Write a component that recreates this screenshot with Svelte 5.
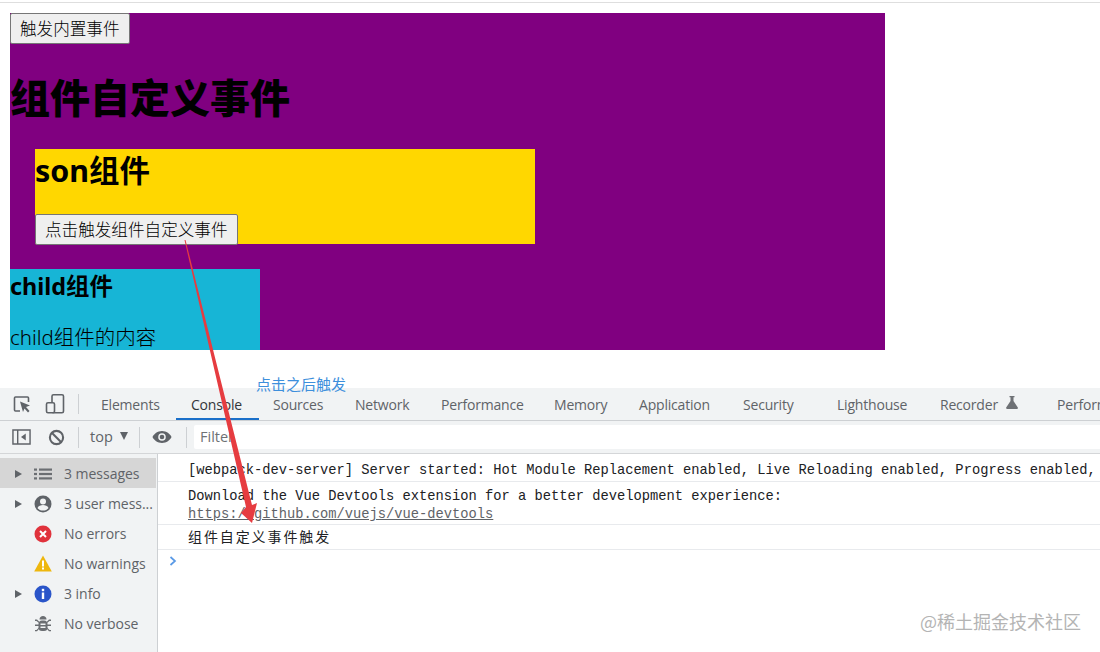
<script>
	const tabs = [
		{ name: 'Elements', width: 89 },
		{ name: 'Console', width: 83, active: true },
		{ name: 'Sources', width: 82 },
		{ name: 'Network', width: 86 },
		{ name: 'Performance', width: 113 },
		{ name: 'Memory', width: 85 },
		{ name: 'Application', width: 104 },
		{ name: 'Security', width: 94 },
		{ name: 'Lighthouse', width: 103 },
		{ name: 'Recorder', width: 117, flask: true },
		{ name: 'Performance insights', width: 160 }
	];
	const filters = [
		{ label: '3 messages', icon: 'list', arrow: true, selected: true },
		{ label: '3 user mess...', icon: 'user', arrow: true },
		{ label: 'No errors', icon: 'error' },
		{ label: 'No warnings', icon: 'warning' },
		{ label: '3 info', icon: 'info', arrow: true },
		{ label: 'No verbose', icon: 'bug' }
	];
</script>

<div class="page">
	<div class="app">
		<button class="native">触发内置事件</button>
		<h1>组件自定义事件</h1>
		<div class="son">
			<h2>son组件</h2>
			<button class="native">点击触发组件自定义事件</button>
		</div>
		<div class="child">
			<h3>child组件</h3>
			<p>child组件的内容</p>
		</div>
	</div>

	<div class="devtools">
		<div class="tabbar">
			<div class="tab-icons">
				<svg width="20" height="20" viewBox="0 0 20 20" fill="none">
					<path d="M8 17H3.500a1 1 0 0 1-1-1V4a1 1 0 0 1 1-1h12a1 1 0 0 1 1 1v4" stroke="#5f6368" stroke-width="1.600" />
					<path d="M8 7.500l10 4-4 1.500 3.500 4-1.500 1.500-3.500-4-1.500 3.500z" fill="#5f6368" />
				</svg>
				<svg width="20" height="22" viewBox="0 0 20 22" fill="none">
					<rect x="7" y="1.800" width="11.500" height="18" rx="1.500" stroke="#5f6368" stroke-width="1.600" />
					<rect x="1.500" y="9.800" width="8" height="10" rx="1.500" fill="#f1f3f4" stroke="#5f6368" stroke-width="1.600" />
				</svg>
			</div>
			<span class="sep"></span>
			<div class="tabs">
				{#each tabs as tab}
					<div class="tab" class:active={tab.active} style="width: {tab.width}px">
						{tab.name}
						{#if tab.flask}
							<svg class="flask" width="12" height="13" viewBox="0 0 12 13"><path d="M3.500 0h5v1.200h-1v3.800l4.300 6.500c.4.700 0 1.500-.8 1.500H1c-.8 0-1.200-.8-.8-1.500L4.500 5V1.200h-1z" fill="#6e7175" /></svg>
						{/if}
					</div>
				{/each}
			</div>
		</div>

		<div class="toolbar">
			<svg class="tool-first" width="19" height="16" viewBox="0 0 20 16" fill="none" preserveAspectRatio="none">
				<rect x="1" y="1" width="18" height="14" stroke="#5f6368" stroke-width="1.500" />
				<path d="M6 1v14" stroke="#5f6368" stroke-width="1.500" />
				<path d="M14.500 4.500v7l-5-3.500z" fill="#5f6368" />
			</svg>
			<svg width="17" height="17" viewBox="0 0 18 18" fill="none">
				<circle cx="9" cy="9" r="7" stroke="#5f6368" stroke-width="2.200" />
				<path d="M4 4l10 10" stroke="#5f6368" stroke-width="2.200" />
			</svg>
			<span class="sep short first"></span>
			<span class="context">top</span>
			<span class="caret"></span>
			<span class="sep short middle"></span>
			<svg class="eye" width="20" height="14" viewBox="0 0 20 14">
				<path d="M10 1C5.500 1 2 3.800.5 7 2 10.200 5.500 13 10 13s8-2.800 9.500-6C18 3.800 14.500 1 10 1z" fill="#5f6368" />
				<circle cx="10" cy="7" r="3.800" fill="#f1f3f4" />
				<circle cx="10" cy="7" r="2.300" fill="#5f6368" />
			</svg>
			<span class="sep short last"></span>
			<div class="filter">Filter</div>
		</div>

		<div class="panes">
			<aside class="sidebar">
				{#each filters as item}
					<div class="filter-row" class:selected={item.selected}>
						<span class="arrow" class:hidden={!item.arrow}></span>
						<span class="filter-icon">
							{#if item.icon === 'list'}
								<svg width="18" height="12" viewBox="0 0 18 12" fill="#6b6e72">
									<rect x="0" y="0.500" width="3" height="2.200" /><rect x="0" y="4.900" width="3" height="2.200" /><rect x="0" y="9.300" width="3" height="2.200" />
									<rect x="5" y="0.500" width="13" height="2.200" /><rect x="5" y="4.900" width="13" height="2.200" /><rect x="5" y="9.300" width="13" height="2.200" />
								</svg>
							{:else if item.icon === 'user'}
								<svg width="18" height="18" viewBox="0 0 18 18">
									<circle cx="9" cy="9" r="8.500" fill="#5f6368" />
									<circle cx="9" cy="6.500" r="3" fill="#f1f3f4" />
									<path d="M3.500 13c1-2.200 3.200-3 5.500-3s4.500.8 5.500 3c-1.200 1.600-3.200 2.600-5.500 2.600S4.700 14.600 3.500 13z" fill="#f1f3f4" />
								</svg>
							{:else if item.icon === 'error'}
								<svg width="18" height="18" viewBox="0 0 18 18">
									<circle cx="9" cy="9" r="8.500" fill="#e0323c" />
									<path d="M6 6l6 6M12 6l-6 6" stroke="#fff" stroke-width="2" />
								</svg>
							{:else if item.icon === 'warning'}
								<svg width="18" height="17" viewBox="0 0 18 17">
									<path d="M9 .5L17.800 16.500H.2z" fill="#eeb70e" />
									<rect x="8" y="5.500" width="2" height="6" fill="#fff" />
									<rect x="8" y="12.500" width="2" height="2" fill="#fff" />
								</svg>
							{:else if item.icon === 'info'}
								<svg width="18" height="18" viewBox="0 0 18 18">
									<circle cx="9" cy="9" r="8.500" fill="#2a55c9" />
									<rect x="7.800" y="7.500" width="2.400" height="6.500" fill="#fff" />
									<rect x="7.800" y="3.800" width="2.400" height="2.400" fill="#fff" />
								</svg>
							{:else}
								<svg width="16" height="17" viewBox="0 0 16 17" fill="#6b6e72">
									<path d="M4.500 4.500c0-2 1.500-3.500 3.500-3.500s3.500 1.500 3.500 3.500z" />
									<rect x="3.500" y="5.500" width="9" height="10.500" rx="3.500" />
									<path d="M0 4.500h2l2 2v1.500L1.500 6H0zM16 4.500h-2l-2 2v1.500L14.500 6H16zM0 9.500h4v1.500H0zM12 9.500h4v1.500h-4zM0 15h1.500L4 12.500V14l-2 2.200H0zM16 15h-1.500L12 12.500V14l2 2.200h2z" />
									<rect x="5.500" y="8.500" width="5" height="1.500" fill="#f1f3f4" /><rect x="5.500" y="11.500" width="5" height="1.500" fill="#f1f3f4" />
								</svg>
							{/if}
						</span>
						<span>{item.label}</span>
					</div>
				{/each}
			</aside>

			<main class="console">
				<div class="line one">[webpack-dev-server] Server started: Hot Module Replacement enabled, Live Reloading enabled, Progress enabled,</div>
				<div class="line two">
					<div>Download the Vue Devtools extension for a better development experience:</div>
					<div class="link">https://github.com/vuejs/vue-devtools</div>
				</div>
				<div class="line three">组件自定义事件触发</div>
				<div class="prompt">
					<svg width="8" height="10" viewBox="0 0 8 10" fill="none"><path d="M1.500 1l4.500 4-4.500 4" stroke="#5a9ae6" stroke-width="1.700" /></svg>
				</div>
			</main>
		</div>
	</div>

	<span class="note">点击之后触发</span>
	<svg class="pointer" width="1100" height="652" viewBox="0 0 1100 652">
		<path d="M184.500 240L185.500 240L252 505L257 503L252 523L241 513L246 507z" fill="#e63c40" />
	</svg>
	<span class="mark">@稀土掘金技术社区</span>
</div>

<style>
	:global(body) {
		margin: 0;
		background: #fff;
	}

	.page {
		position: relative;
		width: 1100px;
		height: 652px;
		overflow: hidden;
		box-sizing: border-box;
		border-top: 1px solid transparent;
		font-family: 'Noto Sans', 'Noto Sans CJK SC', sans-serif;
		color: #000;
	}
	.page::before {
		content: '';
		display: block;
		height: 1px;
		margin-top: 1px;
		background: #dedede;
	}

	.app {
		width: 875px;
		height: 337px;
		margin: 10px 0 0 10px;
		background: #800080;
	}
	.native {
		display: block;
		box-sizing: border-box;
		height: 31px;
		padding: 0 9px;
		border: 1px solid #767676;
		border-radius: 2px;
		background: #efefef;
		color: #000;
		font-family: 'Noto Sans CJK SC', sans-serif;
		font-size: 16.600px;
		font-weight: 300;
		line-height: 29px;
	}
	h1 {
		margin: 26px 0 0;
		height: 79px;
		font-size: 40px;
		line-height: 56px;
		font-weight: 900;
	}
	.son {
		width: 500px;
		height: 95px;
		margin-left: 25px;
		background: #ffd700;
	}
	h2 {
		margin: 0;
		height: 65px;
		font-size: 30.400px;
		line-height: 44px;
		font-weight: 700;
	}
	.child {
		width: 250px;
		height: 81px;
		margin-top: 25px;
		background: #17b5d6;
	}
	h3 {
		margin: 0;
		height: 56px;
		font-size: 23.400px;
		line-height: 34px;
		font-weight: 700;
	}
	p {
		margin: 0;
		font-size: 20.500px;
		line-height: 25px;
		font-weight: 300;
		color: #000;
	}

	.devtools {
		margin-top: 38px;
		height: 264px;
		background: #fff;
		font-family: 'Open Sans', 'Noto Sans', sans-serif;
		color: #5f6368;
	}
	.tabbar {
		display: flex;
		align-items: center;
		box-sizing: border-box;
		height: 33px;
		background: #f1f3f4;
		border-bottom: 1px solid #cdd0d3;
	}
	.tab-icons {
		flex: none;
		display: flex;
		align-items: center;
		gap: 13px;
		width: 78px;
		box-sizing: border-box;
		padding-left: 12px;
	}
	.sep {
		flex: none;
		width: 1px;
		height: 20px;
		background: #cdd0d3;
	}
	.tabs {
		display: flex;
		margin-left: 8px;
		flex: none;
	}
	.tab {
		flex: none;
		box-sizing: border-box;
		height: 32px;
		padding-left: 14px;
		font-size: 14px;
		letter-spacing: -0.2px;
		line-height: 33px;
		white-space: nowrap;
		position: relative;
	}
	.tab.active {
		padding-left: 15px;
		color: #33363a;
		border-bottom: 2px solid #1a6fc9;
	}
	.flask {
		margin-left: 5px;
		vertical-align: 1px;
	}

	.toolbar {
		display: flex;
		align-items: center;
		box-sizing: border-box;
		height: 33px;
		background: #f1f3f4;
		border-bottom: 1px solid #d4d6d8;
	}
	.tool-first {
		margin: 0 17px 0 12px;
	}
	.sep.short {
		height: 21px;
	}
	.sep.first {
		margin: 0 11px 0 13px;
	}
	.sep.middle {
		margin: 0 12px 0 11px;
	}
	.sep.last {
		margin: 0 7px 0 14px;
	}
	.context {
		width: 23px;
		font-size: 14.500px;
		line-height: 20px;
	}
	.caret {
		width: 0;
		height: 0;
		margin: -2px 0 0 7px;
		border-left: 4.500px solid transparent;
		border-right: 4.500px solid transparent;
		border-top: 8px solid #5f6368;
	}
	.eye {
		flex: none;
	}
	.filter {
		flex: 1;
		box-sizing: border-box;
		height: 24px;
		padding-left: 6px;
		background: #fff;
		font-size: 14.500px;
		line-height: 24px;
		color: #6e7175;
		border-radius: 2px 0 0 2px;
	}

	.panes {
		display: flex;
		height: 198px;
	}
	.sidebar {
		flex: none;
		box-sizing: border-box;
		width: 158px;
		padding-top: 4px;
		background: #f1f3f4;
		border-right: 1px solid #cdd0d3;
		font-size: 14px;
		letter-spacing: -0.03px;
	}
	.filter-row {
		display: flex;
		align-items: center;
		height: 30px;
		white-space: nowrap;
		padding-top: 1px;
		box-sizing: border-box;
	}
	.filter-row.selected {
		background: #d6d6d6;
		width: 156px;
	}
	.arrow {
		flex: none;
		width: 0;
		height: 0;
		margin-left: 15px;
		border-top: 4.500px solid transparent;
		border-bottom: 4.500px solid transparent;
		border-left: 7px solid #5f6368;
	}
	.arrow.hidden {
		visibility: hidden;
	}
	.filter-icon {
		flex: none;
		display: flex;
		justify-content: center;
		width: 18px;
		margin: 0 12px;
	}

	.console {
		flex: 1;
		min-width: 0;
		overflow: hidden;
		padding-top: 3px;
		font-family: 'Liberation Mono', 'Noto Sans CJK SC', monospace;
		font-size: 13.750px;
		color: #202124;
	}
	.line {
		box-sizing: border-box;
		padding-left: 30px;
		border-bottom: 1px solid #e8eaed;
		white-space: nowrap;
	}
	.line.one {
		height: 25px;
		padding-top: 5px;
		line-height: 17px;
	}
	.line.two {
		height: 43px;
		padding-top: 6px;
		line-height: 18px;
	}
	.line.three {
		height: 25px;
		padding-top: 2px;
		line-height: 18px;
		font-family: 'Noto Sans CJK SC', sans-serif;
		font-size: 14px;
		letter-spacing: 1.900px;
	}
	.link {
		color: #5f6368;
		text-decoration: underline;
	}
	.prompt {
		padding: 6px 0 0 11px;
		line-height: 14px;
	}

	.note {
		position: absolute;
		left: 256px;
		top: 374px;
		font-family: 'Noto Sans CJK SC', sans-serif;
		font-size: 15px;
		line-height: 18px;
		color: #3d8fdc;
	}
	.pointer {
		position: absolute;
		left: 0;
		top: -1px;
		pointer-events: none;
	}
	.mark {
		position: absolute;
		right: 19px;
		top: 608px;
		font-family: 'Noto Sans CJK SC', sans-serif;
		font-size: 18px;
		line-height: 24px;
		color: #b4b4b4;
	}
</style>
